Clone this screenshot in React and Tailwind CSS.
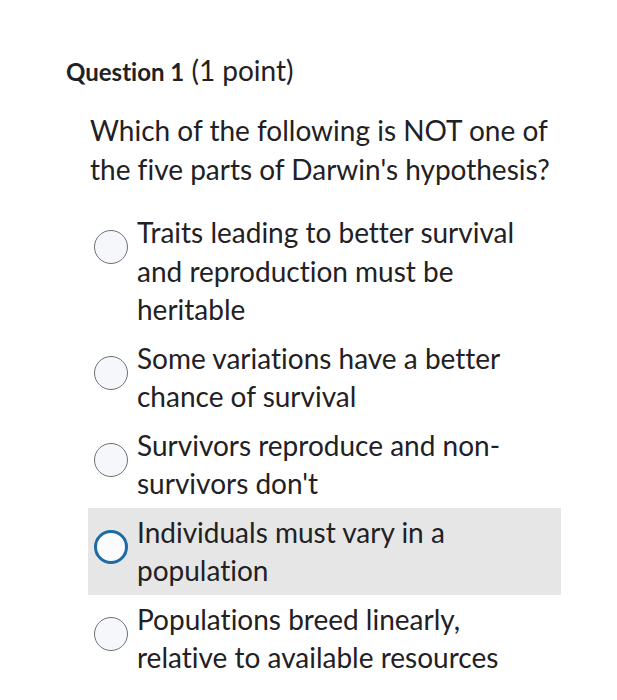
import React from "react";

const opciones = [
  { id: 1, texto: "Traits leading to better survival and reproduction must be heritable" },
  { id: 2, texto: "Some variations have a better chance of survival" },
  { id: 3, texto: "Survivors reproduce and non-survivors don't" },
  { id: 4, texto: "Individuals must vary in a population", marcada: true },
  { id: 5, texto: "Populations breed linearly, relative to available resources" },
];

const Radio = ({ marcada }) => (
  <span
    className={
      marcada
        ? "mt-[17px] h-[34px] w-[34px] shrink-0 rounded-full border-[3px] border-[#1d6aa5] bg-[#fbfcff]"
        : "mt-[17px] h-[34px] w-[34px] shrink-0 rounded-full border border-[#6b7175] bg-[#f6f7fb]"
    }
  />
);

const App = () => {
  return (
    <div
      className="h-[700px] w-[617px] bg-white text-[#1f2124] [font-variant-ligatures:none]"
      style={{ fontFamily: "Lato, 'Open Sans', sans-serif" }}
    >
      <div className="pt-[55px] pl-[66px]">
        <h2 className="text-[28px] leading-[30px]">
          <span className="text-[24px] font-bold">Question 1</span> (1 point)
        </h2>
      </div>

      <div className="pl-[90px] pt-[24px]">
        <p className="w-[480px] text-[28px] leading-[38.5px]">
          Which of the following is NOT one of the five parts of Darwin's hypothesis?
        </p>
      </div>

      <div className="mt-[20px] ml-[88px] w-[473px]">
        {opciones.map((opcion) => (
          <div
            key={opcion.id}
            className={
              opcion.marcada
                ? "flex items-start gap-[9px] bg-[#e6e6e6] py-[5px] pl-[6px]"
                : "flex items-start gap-[9px] py-[5px] pl-[6px]"
            }
          >
            <Radio marcada={opcion.marcada} />
            <span className="w-[400px] text-[28px] leading-[38.5px]">{opcion.texto}</span>
          </div>
        ))}
      </div>
    </div>
  );
};

export default App;
